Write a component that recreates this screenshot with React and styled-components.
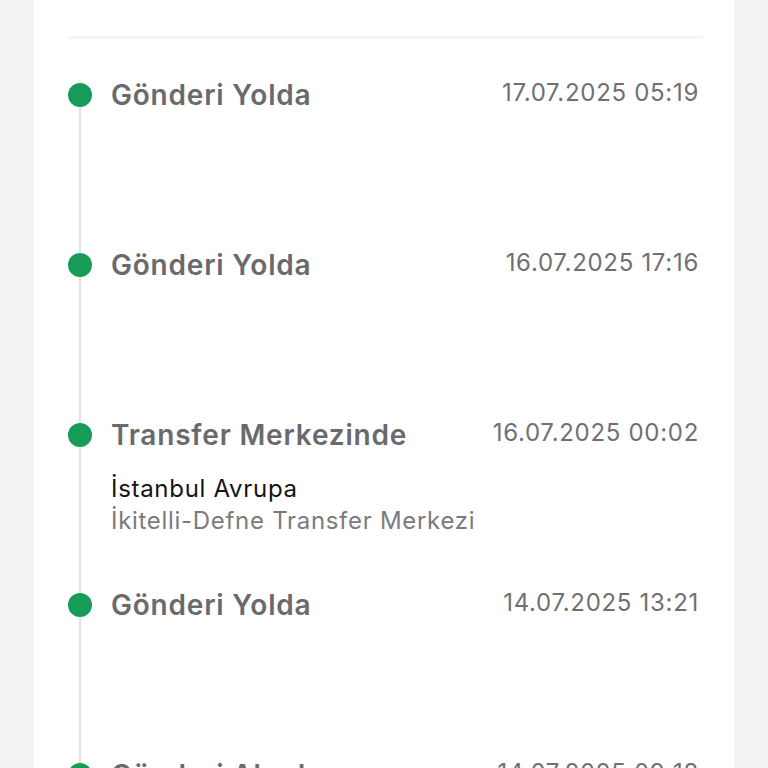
import styled, { createGlobalStyle } from 'styled-components';

const GlobalStyle = createGlobalStyle`
  html, body {
    margin: 0;
    padding: 0;
    background: #f2f3f5;
    font-family: Inter, "Noto Sans", "Liberation Sans", sans-serif;
  }
`;

const Page = styled.div`
  padding: 0 34px;
  height: 768px;
  overflow: hidden;
`;

const Card = styled.div`
  background: #ffffff;
  padding: 36px 35px 0 34px;
  min-height: 900px;
`;

const Divider = styled.div`
  height: 3px;
  margin-right: -4px;
  background: #f6f6f6;
`;

const List = styled.div`
  margin-top: 44px;
`;

const Item = styled.div`
  display: flex;
  gap: 19px;
  height: 170px;
`;

const Rail = styled.div`
  display: flex;
  flex-direction: column;
  align-items: center;
  width: 24px;
  flex-shrink: 0;
`;

const Dot = styled.div`
  width: 24px;
  height: 24px;
  border-radius: 50%;
  background: #169c57;
  flex-shrink: 0;
`;

const Line = styled.div`
  flex: 1;
  width: 2px;
  background: #e2e2e4;
`;

const Content = styled.div`
  flex: 1;
  min-width: 0;
`;

const Header = styled.div`
  display: flex;
  justify-content: space-between;
  align-items: center;
  height: 24px;
`;

const Title = styled.div`
  font-size: 28px;
  font-weight: 600;
  color: #6a6a6c;
  letter-spacing: 0.8px;
  white-space: nowrap;
`;

const Date = styled.div`
  font-size: 24px;
  color: #707072;
  letter-spacing: 0.7px;
  margin-top: -6px;
  white-space: nowrap;
`;

const Details = styled.div`
  margin-top: 26px;
  line-height: 32px;
  font-size: 24px;
  letter-spacing: 0.7px;
`;

const Place = styled.div`
  color: ${(p) => (p.$muted ? '#7b7b7d' : '#141414')};
`;

const events = [
  { title: 'Gönderi Yolda', date: '17.07.2025 05:19' },
  { title: 'Gönderi Yolda', date: '16.07.2025 17:16' },
  {
    title: 'Transfer Merkezinde',
    date: '16.07.2025 00:02',
    city: 'İstanbul Avrupa',
    center: 'İkitelli-Defne Transfer Merkezi',
  },
  { title: 'Gönderi Yolda', date: '14.07.2025 13:21' },
  { title: 'Gönderi Alındı', date: '14.07.2025 09:18' },
];

export default function App() {
  return (
    <>
      <GlobalStyle />
      <Page>
        <Card>
          <Divider />
          <List>
            {events.map((e, i) => (
              <Item key={i}>
                <Rail>
                  <Dot />
                  {i < events.length - 1 && <Line />}
                </Rail>
                <Content>
                  <Header>
                    <Title>{e.title}</Title>
                    <Date>{e.date}</Date>
                  </Header>
                  {e.city && (
                    <Details>
                      <Place>{e.city}</Place>
                      <Place $muted>{e.center}</Place>
                    </Details>
                  )}
                </Content>
              </Item>
            ))}
          </List>
        </Card>
      </Page>
    </>
  );
}
